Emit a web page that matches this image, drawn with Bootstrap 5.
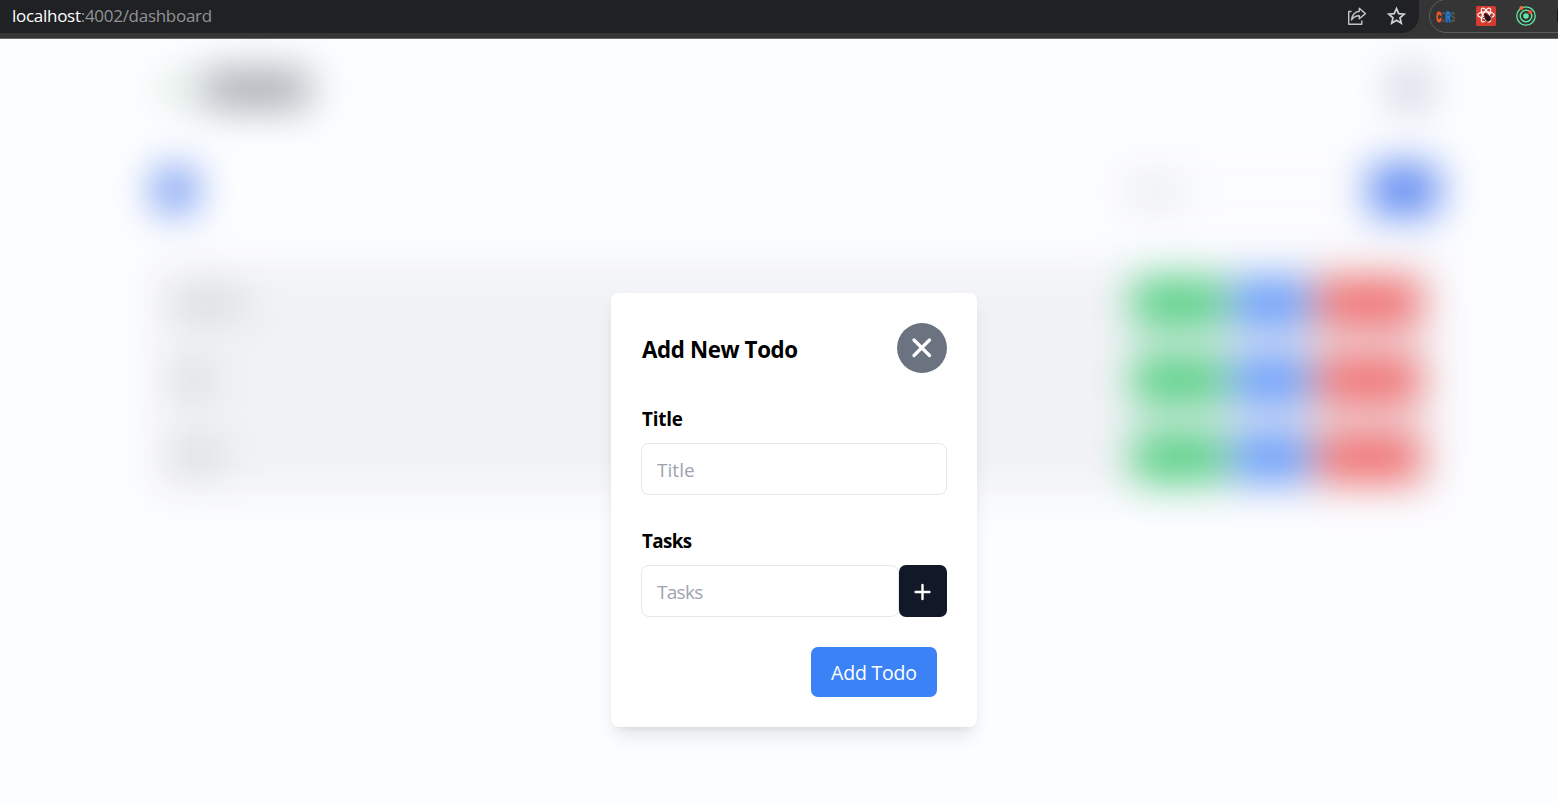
<!DOCTYPE html>
<html lang="en">
<head>
<meta charset="utf-8">
<meta name="viewport" content="width=device-width, initial-scale=1">
<title>Dashboard</title>
<link href="https://cdn.jsdelivr.net/npm/bootstrap@5.3.0/dist/css/bootstrap.min.css" rel="stylesheet">
<style>
body{font-family:"Open Sans","Noto Sans",sans-serif;background:#fcfdff;height:806px;overflow:hidden}
.chrome-bar{height:39px;background:#353535;border-bottom:1px solid #656565;overflow:hidden}
.url-pill{width:1419px;height:33px;background:#202124;border-radius:0 0 17px 0;padding:0 13px 0 12px}
.url-text{font-size:17px;line-height:31px;color:#919395;letter-spacing:-.28px}
.url-text span{color:#fff}
.ext-pill{width:150px;height:34px;margin-left:10px;margin-top:-1px;border:1px solid #5b5b5b;border-radius:17px 0 0 17px;padding-left:5px;gap:18px}
.stage{height:767px}
.backdrop-page{filter:blur(20px);width:1590px;height:850px;padding:25px 152px 0 155px}
.brand-row{height:50px;padding-left:8px}
.brand-mark{width:24px;height:26px;background:#cbe5d2}
.brand-name{width:106px;height:34px;background:#9b9ea6;margin-left:16px}
.user-dot{width:42px;height:46px;border-radius:50%;background:#cdcfe0;margin-right:7px}
.tool-row{height:50px;margin-top:51px}
.tool-add{width:40px;height:42px;background:#5c88ef;border-radius:10px}
.tool-search{width:250px;height:50px;background:#fafbfd;padding-left:5px}
.tool-search div{width:60px;height:24px;background:#e6e7ec;margin-top:4px}
.tool-go{width:68px;height:50px;background:#5784f0}
.todo-list{margin-top:49px;padding:14px 17px 12px 15px;background:#f1f2f6;height:229px;gap:27px}
.todo-line{height:50px}
.todo-label{height:24px;background:#d2d3d6}
.act{height:50px}
.act-g{width:92px;background:#55d083}.act-b{width:76px;background:#669bfa}.act-r{width:104px;background:#f06d6d}
.dialog-layer{padding:254px 0 0 611px}
.todo-card{width:366px;height:434px;border-radius:8px;padding:30px;border:0;background:#fff;box-shadow:0 12px 19px -4px rgba(0,0,0,.1),0 5px 8px -5px rgba(0,0,0,.1)}
.todo-head{height:50px}
.todo-head h1{font-size:22.3px;font-weight:700;color:#000;letter-spacing:-.37px;line-height:30px;padding:3px 0 0 1px}
.close-btn{width:50px;height:50px;border-radius:50%;background:#6b7280;border:0}
.field-label{font-size:18.8px;font-weight:700;line-height:30px;color:#000;letter-spacing:-.6px;margin-bottom:9px;padding-left:1px}
.field-label[for=title]{letter-spacing:-.2px}
.form-control.todo-input{height:52px;border:1px solid #e5e7eb;border-radius:8px;padding:2px 15px 0;font-size:19px;letter-spacing:-.7px;background:#fff}
#title{letter-spacing:.05px}
.todo-input::placeholder{color:#9ca3af;opacity:1}
.plus-btn{width:48px;height:52px;border:0;border-radius:7px;background:#111827;flex:none}
.submit-btn{width:126px;height:50px;border:0;border-radius:7px;background:#3b82f6;color:#fff;font-size:19.5px;letter-spacing:-.2px;padding:2px 0 0;margin-right:10px}
</style>
</head>
<body>
<header class="chrome-bar d-flex">
  <div class="url-pill d-flex flex-shrink-0 justify-content-between align-items-start">
    <div class="url-text"><span>localhost</span>:4002/dashboard</div>
    <div class="d-flex">
      <svg width="20" height="32" viewBox="-1 0 20 32" fill="none" stroke="#c3c4c5" stroke-width="1.4" stroke-linejoin="round"><path d="M4.5 11.5H1.7V24.2H14.8V20.5"/><path d="M12.3 8.3L18.4 13.6L12.3 18.7V15.8C8.6 15.7 6.3 17.1 4.5 20C5 15.4 7.5 12 12.3 11.3Z"/></svg>
      <svg class="ms-3" width="24" height="32" viewBox="-4 0 24 32" fill="none" stroke="#d1d2d3" stroke-width="1.7"><path d="M10.5 8.6L12.7 13.7L18.2 14.2L14 17.8L15.3 23.2L10.5 20.3L5.7 23.2L7 17.8L2.8 14.2L8.3 13.7Z"/></svg>
    </div>
  </div>
  <div class="ext-pill d-flex flex-shrink-0">
    <svg width="22" height="32" viewBox="0 0 22 32" font-family="Liberation Sans" font-weight="700" font-size="6.6"><text transform="translate(1.2 21.5) scale(1 2.3)" stroke-width=".5"><tspan fill="#ff5a1f" stroke="#ff5a1f">C</tspan><tspan fill="#4b555c">O</tspan><tspan fill="#1c7ed6" stroke="#1c7ed6">R</tspan><tspan fill="#555d64">S</tspan></text></svg>
    <svg width="22" height="32" viewBox="0 0 22 32"><rect x="1" y="6" width="20" height="20" rx="1.5" fill="#d73a31"/><g fill="none" stroke="#fff" stroke-width="1.2"><ellipse cx="11" cy="15" rx="8.3" ry="3.1"/><ellipse cx="11" cy="15" rx="7.8" ry="3.1" transform="rotate(60 11 15)"/><ellipse cx="11" cy="15" rx="7.8" ry="3.1" transform="rotate(120 11 15)"/></g><g fill="#2b1715" stroke="#2b1715"><ellipse cx="12.8" cy="18" rx="2.2" ry="3" transform="rotate(-35 12.8 18)"/><circle cx="10.5" cy="14.7" r="1"/><path d="M8 17.5L17 17M9 21L16 15M12 22L12 20M15 21L14 19" stroke-width=".8"/></g></svg>
    <svg width="22" height="32" viewBox="0 0 22 32" fill="none" stroke="#62e6a3"><circle cx="11" cy="16" r="9.2" stroke-width="1.3"/><circle cx="11" cy="16" r="5.8" stroke-width="1.4"/><circle cx="11" cy="16" r="2.8" fill="#62e6a3" stroke="none"/><circle cx="6.3" cy="8" r="1.9" fill="#ff6b2c" stroke="none"/><circle cx="15.3" cy="12" r="1.9" fill="#ff4b2c" stroke="none"/></svg>
    <svg class="flex-shrink-0" width="22" height="32" viewBox="0 0 22 32"><path d="M2 9H12V22H2Z" fill="#151515"/></svg>
  </div>
</header>
<main class="stage position-relative overflow-hidden">
  <div class="backdrop-page position-absolute top-0 start-0" aria-hidden="true">
    <div class="brand-row d-flex align-items-center">
      <div class="brand-mark"></div><div class="brand-name"></div><div class="user-dot ms-auto"></div>
    </div>
    <div class="tool-row d-flex align-items-center">
      <div class="tool-add"></div>
      <div class="tool-search ms-auto d-flex align-items-center"><div></div></div>
      <div class="tool-go"></div>
    </div>
    <div class="todo-list d-flex flex-column">
      <div class="todo-line d-flex align-items-center"><div class="todo-label" style="width:76px"></div><div class="act act-g ms-auto"></div><div class="act act-b mx-2"></div><div class="act act-r"></div></div>
      <div class="todo-line d-flex align-items-center"><div class="todo-label" style="width:44px"></div><div class="act act-g ms-auto"></div><div class="act act-b mx-2"></div><div class="act act-r"></div></div>
      <div class="todo-line d-flex align-items-center"><div class="todo-label" style="width:54px"></div><div class="act act-g ms-auto"></div><div class="act act-b mx-2"></div><div class="act act-r"></div></div>
    </div>
  </div>
  <div class="dialog-layer position-relative">
    <form class="todo-card">
      <div class="todo-head d-flex justify-content-between align-items-center">
        <h1 class="m-0">Add New Todo</h1>
        <button type="button" class="close-btn p-0 d-flex align-items-center justify-content-center" aria-label="Close">
          <svg width="24" height="24" viewBox="0 0 24 24" stroke="#fff" stroke-width="3.3" stroke-linecap="round"><path d="M4 4L19.5 19.5M19.5 4L4 19.5"/></svg>
        </button>
      </div>
      <div style="margin-top:31px">
        <label class="field-label d-block" for="title">Title</label>
        <input id="title" class="form-control todo-input" placeholder="Title">
      </div>
      <div style="margin-top:31px">
        <label class="field-label d-block" for="tasks">Tasks</label>
        <div class="d-flex">
          <input id="tasks" class="form-control todo-input" placeholder="Tasks">
          <button type="button" class="plus-btn p-0 d-flex align-items-center justify-content-center" aria-label="Add task">
            <svg width="20" height="20" viewBox="0 0 20 20" stroke="#fff" stroke-width="2.4" stroke-linecap="round"><path d="M2.6 11H16.4M9.5 4V18"/></svg>
          </button>
        </div>
      </div>
      <div class="d-flex justify-content-end" style="margin-top:30px">
        <button type="button" class="submit-btn">Add Todo</button>
      </div>
    </form>
  </div>
</main>
<script src="https://cdn.jsdelivr.net/npm/bootstrap@5.3.0/dist/js/bootstrap.bundle.min.js"></script>
</body>
</html>
